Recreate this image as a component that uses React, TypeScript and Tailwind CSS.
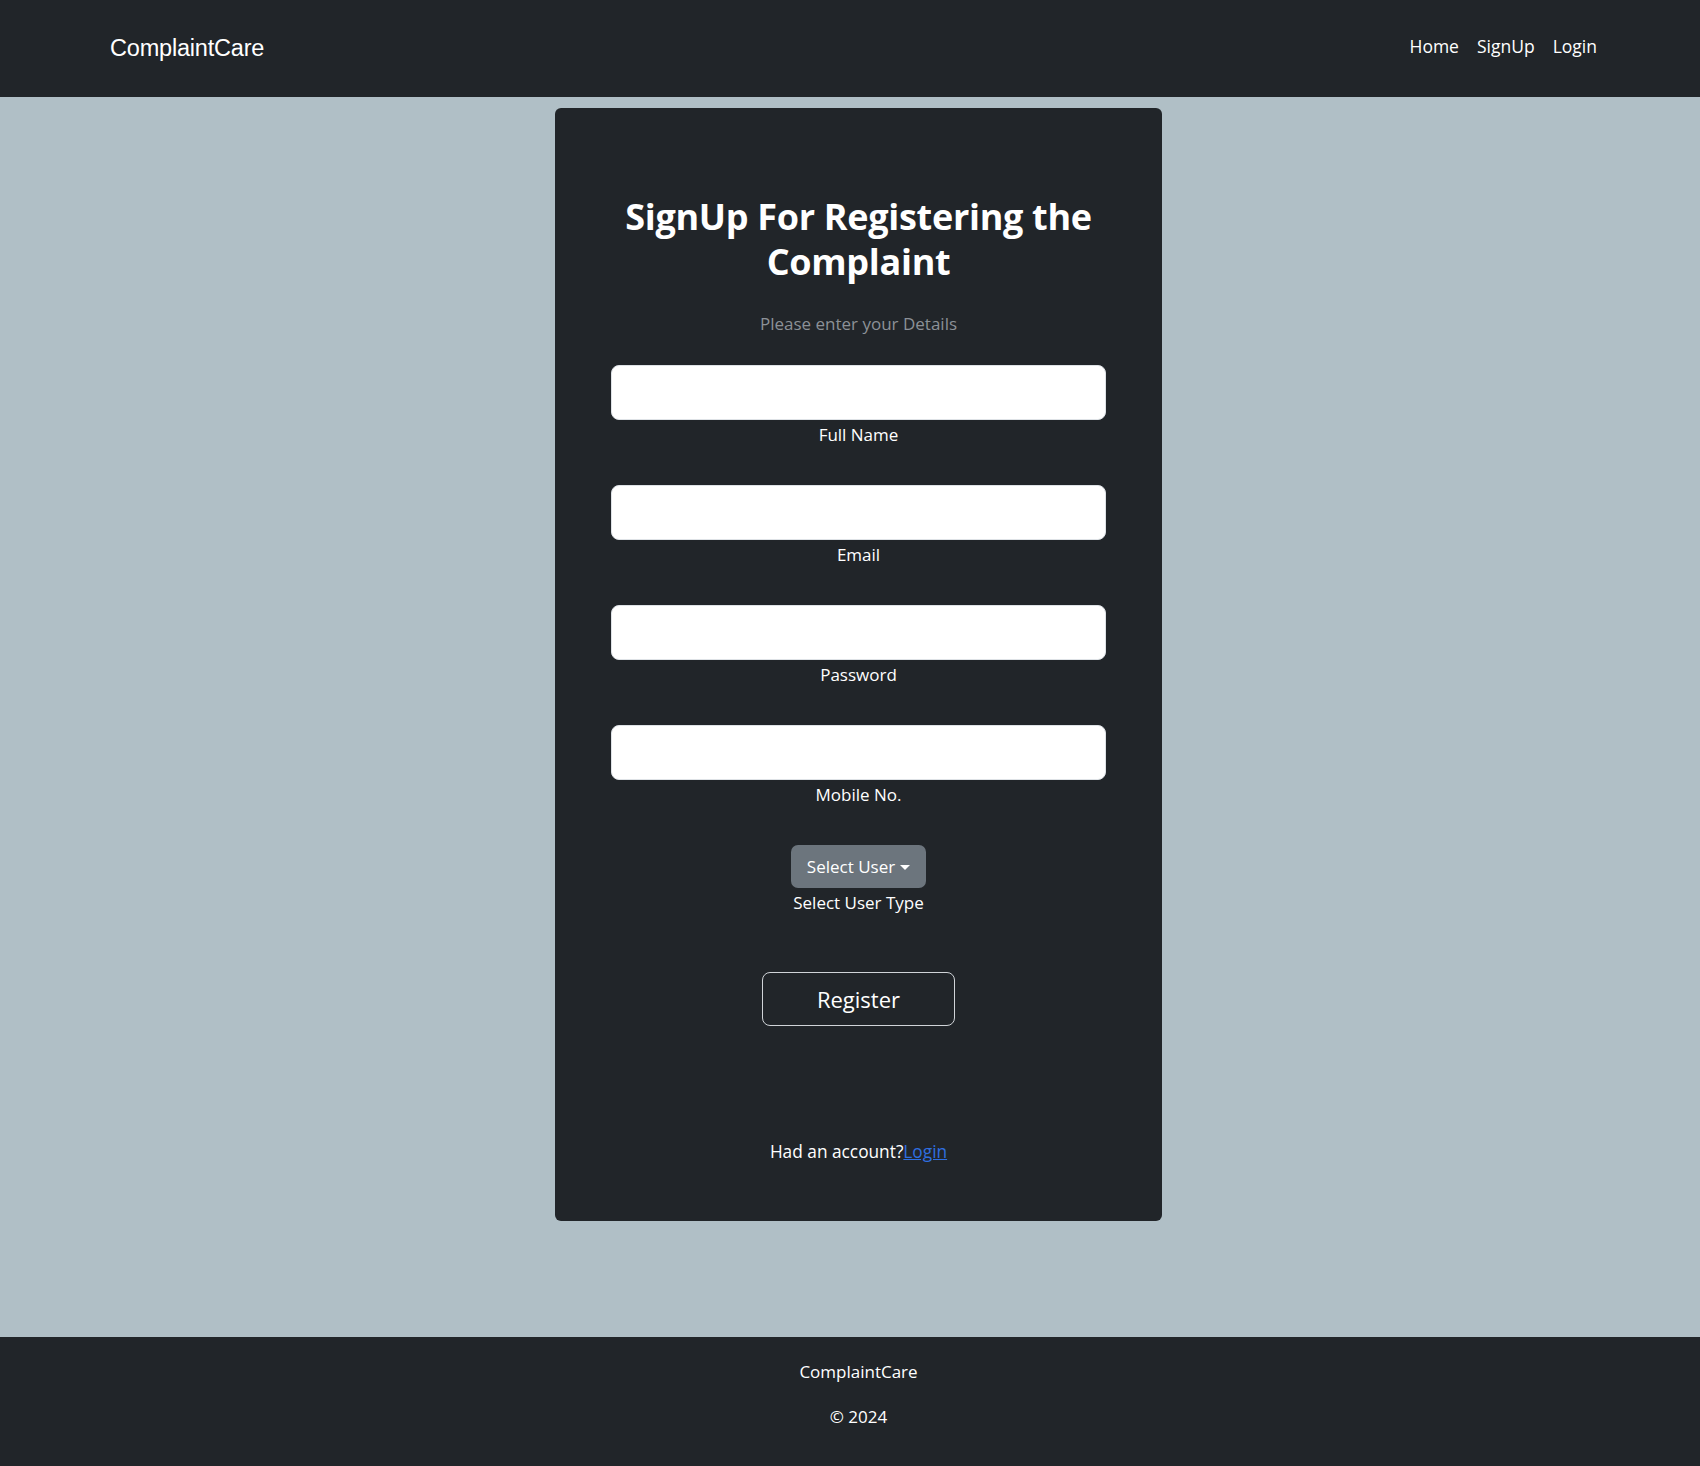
import React from "react";

const seg = { fontFamily: '"Open Sans", "Noto Sans", sans-serif' };

function Field({ label }: { label: string }) {
  return (
    <div className="flex flex-col items-center w-full">
      <input
        type="text"
        className="w-full h-[55px] bg-white rounded-[8px] border border-[#dee2e6] outline-none px-4 text-[#212529]"
      />
      <label className="mt-[3px] leading-[24px] text-[17px] text-white">{label}</label>
    </div>
  );
}

export default function App() {
  return (
    <div className="w-[1700px] min-h-[1466px] flex flex-col bg-[#b0bfc6]" style={seg}>
      <nav className="h-[97px] bg-[#212529] flex items-center justify-between pl-[110px] pr-[103px] shrink-0">
        <a
          className="text-white text-[23.5px] leading-none tracking-[-0.2px]"
          style={{ fontFamily: '"Liberation Sans", Arial, sans-serif' }}
        >
          ComplaintCare
        </a>
        <div className="flex items-center gap-[18px] text-[17.5px] text-white -mt-[4px]">
          <a>Home</a>
          <a>SignUp</a>
          <a>Login</a>
        </div>
      </nav>
      <main className="h-[1240px] pl-[17px] pt-[11px] flex justify-center items-start shrink-0">
        <div className="w-[607px] h-[1113px] bg-[#212529] rounded-[6px] px-[56px] pt-[86px] flex flex-col items-center">
          <h1 className="text-white text-[36px] leading-[45px] font-bold text-center tracking-[-0.3px]">
            SignUp For Registering the
            <br />
            Complaint
          </h1>
          <p className="mt-[28px] text-[17px] leading-[24px] text-[#8c9197]">Please enter your Details</p>
          <div className="mt-[29px] w-full flex flex-col gap-[38px]">
            <Field label="Full Name" />
            <Field label="Email" />
            <Field label="Password" />
            <Field label="Mobile No." />
          </div>
          <button className="mt-[38px] h-[43px] w-[135px] bg-[#6c757d] rounded-[7px] text-white text-[17px] flex items-center justify-center gap-[5px]">
            <span>Select User</span>
            <span className="w-0 h-0 border-l-[5px] border-r-[5px] border-t-[5px] border-l-transparent border-r-transparent border-t-white mt-[1px]" />
          </button>
          <p className="mt-[3px] leading-[24px] text-[17px] text-white">Select User Type</p>
          <button className="mt-[57px] h-[54px] w-[193px] rounded-[8px] border border-[#d0d4d8] text-white text-[22px]">
            Register
          </button>
          <p className="mt-[114px] leading-[24px] text-[17.3px] text-white">
            Had an account?<a className="text-[#2f6fe0] underline">Login</a>
          </p>
        </div>
      </main>
      <footer className="flex-1 bg-[#212529] pl-[17px] flex flex-col items-center pt-[23px] text-white text-[17px]">
        <p className="leading-[24px]">ComplaintCare</p>
        <p className="leading-[24px] mt-[21px]">© 2024</p>
      </footer>
    </div>
  );
}
